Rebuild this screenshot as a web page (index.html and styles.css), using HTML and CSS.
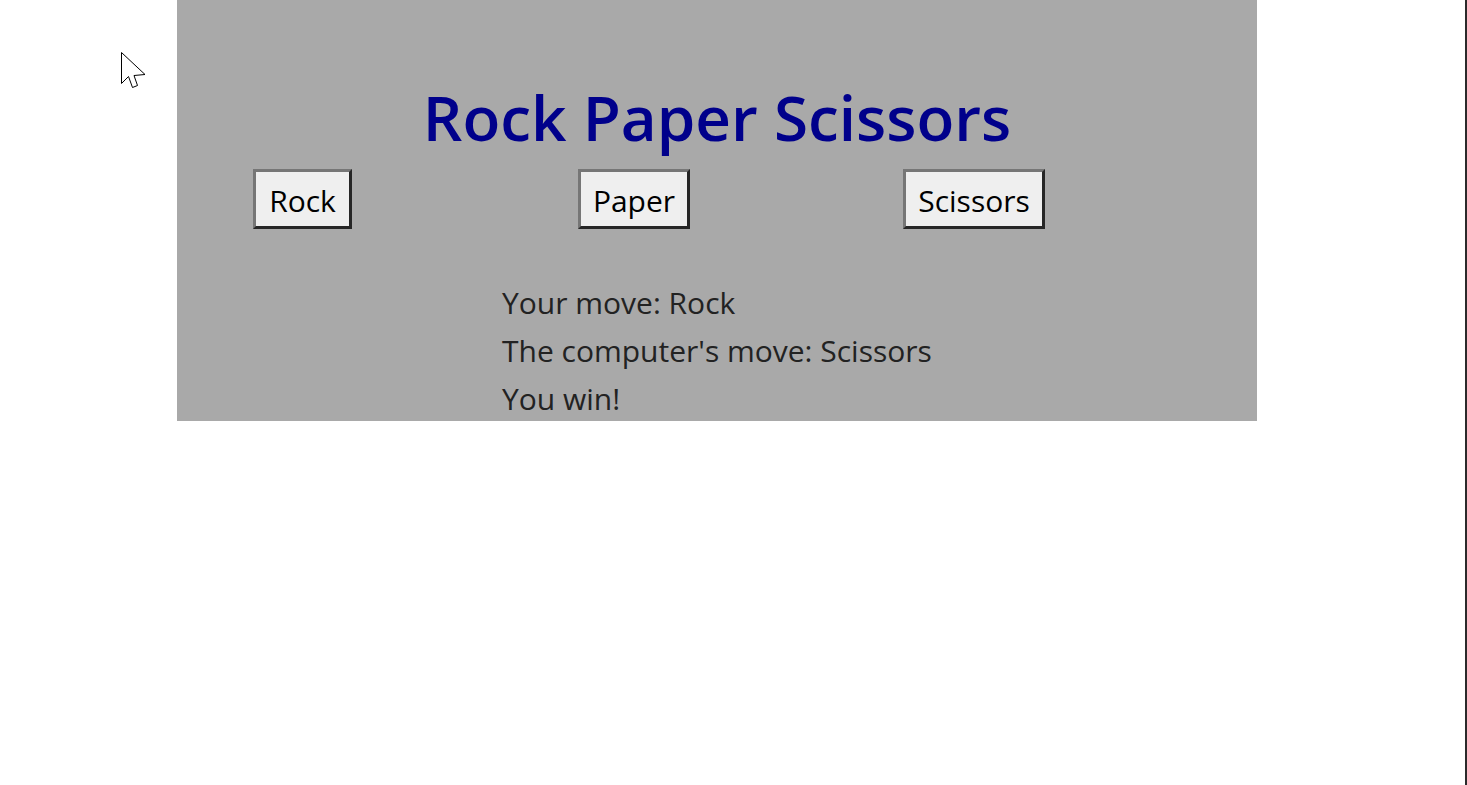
FILE: index.html
```html
<!DOCTYPE html>
<html>
<head>
<meta charset="utf-8">
<link rel="stylesheet" href="styles.css">
</head>
<body>
<main class="game">
  <h1 class="title">Rock Paper Scissors</h1>
  <div class="choices">
    <div class="cell"><button class="btn btn-rock">Rock</button></div>
    <div class="cell"><button class="btn btn-paper">Paper</button></div>
    <div class="cell"><button class="btn btn-scissors">Scissors</button></div>
  </div>
  <div class="results">
    <p class="line">Your move: Rock</p>
    <p class="line">The computer's move: Scissors</p>
    <p class="line">You win!</p>
  </div>
</main>
<div class="frame-edge"></div>
<svg class="cursor" width="28" height="40" viewBox="0 0 28 40">
  <path d="M1.5 1.5 L1.5 32.5 L8.5 25.5 L12.5 36.5 L17.5 34.5 L14 24.5 L25 23.5 Z" fill="#fff" stroke="#000" stroke-width="1" stroke-linejoin="miter"/>
</svg>
</body>
</html>
```
FILE: styles.css
```css
html, body {
  margin: 0;
  padding: 0;
  background: #fff;
  height: 100%;
}
body {
  font-family: "Open Sans", "Noto Sans", sans-serif;
  overflow: hidden;
}
.game {
  width: 1080px;
  height: 421px;
  margin-left: 177px;
  background: #a9a9a9;
  box-sizing: border-box;
  padding-top: 72px;
  overflow: hidden;
}
.title {
  margin: 0;
  text-align: center;
  color: #00008b;
  font-size: 62px;
  font-weight: 600;
  line-height: 90px;
  height: 97px;
}
.choices {
  display: grid;
  grid-template-columns: 325px 325px 325px;
  padding-left: 76px;
}
.btn {
  box-sizing: border-box;
  height: 60px;
  border: 3px solid;
  border-color: #767676 #262626 #262626 #767676;
  background: #efefef;
  color: #000;
  font-family: "Open Sans", "Noto Sans", sans-serif;
  font-size: 30px;
  padding: 4px 0 0 0;
  line-height: 50px;
}
.btn-rock { width: 99px; }
.btn-paper { width: 112px; }
.btn-scissors { width: 142px; }
.results {
  padding-left: 325px;
  padding-top: 50px;
}
.line {
  margin: 0;
  font-size: 30px;
  line-height: 48px;
  color: #222;
}
.frame-edge {
  position: fixed;
  top: 0;
  right: 0;
  width: 2px;
  height: 100%;
  background: #2b2b2b;
}
.cursor {
  position: absolute;
  left: 120px;
  top: 51px;
}
```
